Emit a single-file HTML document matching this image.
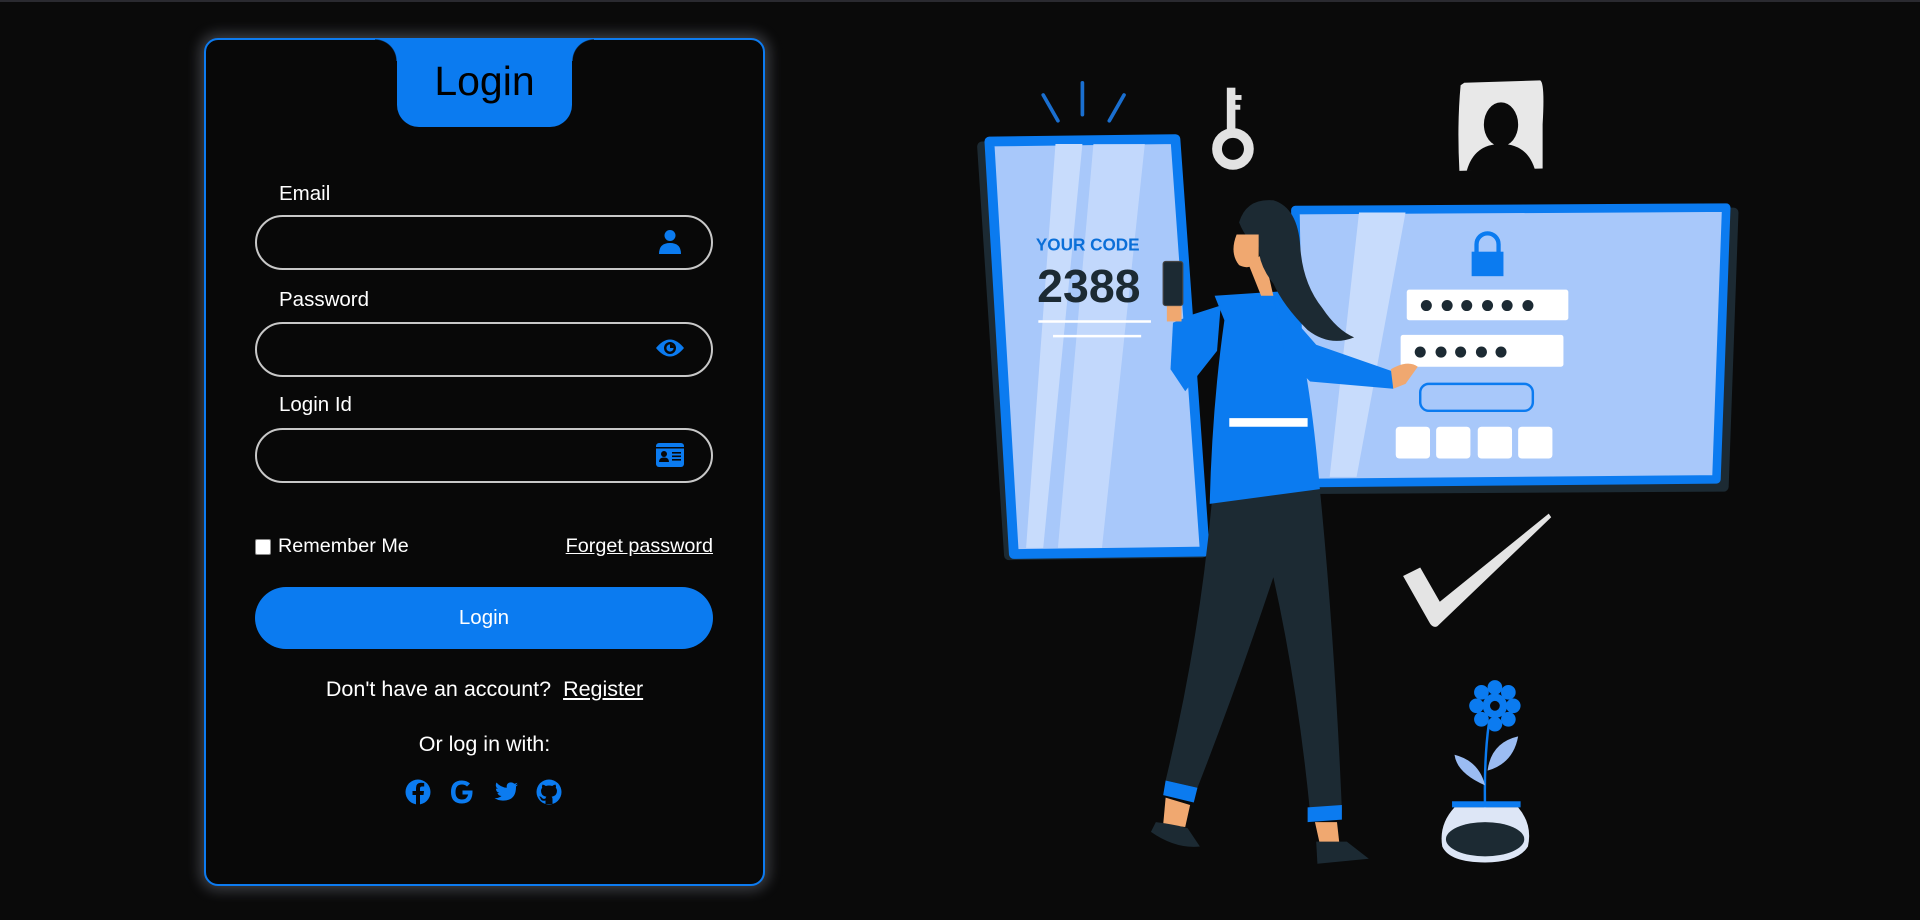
<!DOCTYPE html>
<html><head><meta charset="utf-8"><style>
*{margin:0;padding:0;box-sizing:border-box}
body{width:1920px;height:918px;background:#0a0a0a;overflow:hidden;position:relative;font-family:"Liberation Sans",sans-serif;color:#fff;border-top:2px solid #2a2a30}
.card{position:absolute;left:204px;top:36px;width:561px;height:848px;background:#080808;border:2px solid #0d7bf0;border-radius:14px;box-shadow:0 0 14px 4px rgba(200,210,230,.28)}
.tab{position:absolute;left:397px;top:37px;width:175px;height:88px;background:#0b7bf0;border-radius:0 0 22px 22px;color:#000;font-size:41px;text-align:center;line-height:84px}
.tab:before,.tab:after{content:"";position:absolute;top:0;width:22px;height:22px}
.tab:before{left:-22px;background:radial-gradient(circle at 0 100%,#080808 21px,#0b7bf0 22px)}
.tab:after{right:-22px;background:radial-gradient(circle at 100% 100%,#080808 21px,#0b7bf0 22px)}
.lbl{position:absolute;left:279px;font-size:20.5px;line-height:24px}
.inp{position:absolute;left:255px;width:458px;height:55px;border:2px solid #c8c8c8;border-radius:28px}
.ico{position:absolute;left:655px}
.abs{position:absolute}
</style></head><body>
<div class="card"></div>
<div class="tab">Login</div>

<div class="lbl" style="top:180px">Email</div>
<div class="inp" style="top:213px"></div>
<svg class="ico" style="top:227px" width="30" height="26" viewBox="0 0 30 26"><circle cx="15" cy="6.5" r="5.5" fill="#0b7bf0"/><path d="M4 25 Q4 14 15 14 Q26 14 26 25Z" fill="#0b7bf0"/></svg>

<div class="lbl" style="top:286px">Password</div>
<div class="inp" style="top:320px"></div>
<svg class="ico" style="top:333px" width="30" height="26" viewBox="0 0 30 26"><path d="M1 13 Q15 -4 29 13 Q15 30 1 13Z" fill="#0b7bf0"/><circle cx="15" cy="13" r="6" fill="#080808"/><circle cx="15" cy="13" r="3.6" fill="#0b7bf0"/><path d="M15 9.4 A3.6 3.6 0 0 1 18.6 13 L15 13Z" fill="#080808"/></svg>

<div class="lbl" style="top:391px">Login Id</div>
<div class="inp" style="top:426px"></div>
<svg class="ico" style="top:440px" width="30" height="26" viewBox="0 0 30 26"><rect x="1" y="1" width="28" height="24" rx="3" fill="#0b7bf0"/><rect x="1" y="5" width="28" height="1.5" fill="#080808"/><circle cx="9" cy="12" r="3" fill="#080808"/><path d="M4 20 Q4 15.5 9 15.5 Q14 15.5 14 20Z" fill="#080808"/><rect x="17" y="10" width="9" height="1.6" fill="#080808"/><rect x="17" y="13.5" width="9" height="1.6" fill="#080808"/><rect x="17" y="17" width="9" height="1.6" fill="#080808"/></svg>

<div class="abs" style="left:255px;top:537px;width:16px;height:16px;background:#fff;border:1px solid #888;border-radius:2px"></div>
<div class="abs" style="left:278px;top:532px;font-size:19.8px;line-height:24px">Remember Me</div>
<div class="abs" style="left:533px;top:532px;font-size:19.8px;line-height:24px;text-decoration:underline;width:180px;text-align:right">Forget password</div>

<div class="abs" style="left:255px;top:585px;width:458px;height:62px;background:#0b7bf0;border-radius:31px;text-align:center;line-height:62px;font-size:20.5px">Login</div>

<div class="abs" style="left:204px;top:674px;width:561px;text-align:center;font-size:21.5px;line-height:26px">Don't have an account?&nbsp; <span style="text-decoration:underline">Register</span></div>
<div class="abs" style="left:204px;top:729px;width:561px;text-align:center;font-size:21.5px;line-height:26px">Or log in with:</div>

<svg class="abs" style="left:404px;top:776px" width="160" height="28" viewBox="0 0 160 28">
<circle cx="14" cy="14" r="12.5" fill="#0b7bf0"/><path d="M16 27 V17 H19.5 L20 13 H16 V10.5 Q16 8.5 18 8.5 H20.2 V5 Q18.5 4.7 17 4.7 Q12 4.7 12 10 V13 H8.5 V17 H12 V27Z" fill="#080808"/>
<path d="M68.5 12.5 H58.5 V16.5 H64.2 Q63 21.5 58 21.5 Q51.5 21.5 51.5 14 Q51.5 6.5 58 6.5 Q61 6.5 63 8.5 L66 5.5 Q62.8 2.5 58 2.5 Q47 2.5 47 14 Q47 25.5 58 25.5 Q69 25.5 68.5 12.5Z" fill="#0b7bf0"/>
<path d="M114 6.5 Q112.8 7.1 111.3 7.3 Q112.8 6.3 113.4 4.7 Q112 5.5 110.4 5.8 Q109 4.4 107 4.4 Q102.7 4.4 102.7 8.7 Q102.7 9.3 102.8 9.7 Q96.5 9.4 92.5 4.5 Q91.8 5.7 91.8 7 Q91.8 9.6 93.9 10.9 Q92.8 10.9 91.9 10.4 Q91.9 14 95.3 14.9 Q94.3 15.1 93.4 14.9 Q94.3 17.9 97.5 18 Q94.6 20.5 90.5 20 Q94 22.6 99 22.6 Q112 22.6 112 9 V8.5 Q113.2 7.6 114 6.5Z" fill="#0b7bf0"/>
<circle cx="145" cy="14" r="12.5" fill="#0b7bf0"/><path d="M141.5 26 V22.5 Q137.5 23.5 136.5 20.5 Q136 19 135 18.7 Q137 18 138 20 Q139.5 21.5 141.5 20.5 Q141.7 19.2 142.4 18.7 Q137 18 137 12.8 Q137 11 138.2 9.8 Q137.7 8.3 138.4 6.6 Q140 6.5 141.8 8 Q145 7.1 148.2 8 Q150 6.5 151.6 6.6 Q152.3 8.3 151.8 9.8 Q153 11 153 12.8 Q153 18 147.6 18.7 Q148.5 19.5 148.5 21 V26Z" fill="#080808"/>
</svg>

<svg class="abs" style="left:0;top:0" width="1920" height="918" viewBox="0 0 1568 750">
<g stroke="#1a6fd0" stroke-width="3" stroke-linecap="round"><line x1="852" y1="76" x2="864" y2="97"/><line x1="884" y1="66" x2="884" y2="92"/><line x1="918" y1="76" x2="906" y2="97"/></g>
<path d="M802 118 L958 116 L982 450 L824 452Z" fill="#1c2a33" stroke="#1c2a33" stroke-width="8" stroke-linejoin="round"/>
<path d="M808 114 L960 112 L984 449 L828 451Z" fill="#a8c8fa" stroke="#0b7bf0" stroke-width="8" stroke-linejoin="round"/>
<path d="M862 116 L884 116 L852 446 L838 446Z" fill="#c8dcfc"/>
<path d="M893 116 L935 116 L900 446 L864 446Z" fill="#c8dcfc" opacity=".8"/>
<text x="846" y="203" font-family="Liberation Sans,sans-serif" font-weight="bold" font-size="14" fill="#0b6fd8">YOUR CODE</text>
<text x="847" y="245" font-family="Liberation Sans,sans-serif" font-size="38" fill="#1c2a33" font-weight="bold">2388</text>
<line x1="848" y1="261" x2="940" y2="261" stroke="#fff" stroke-width="2"/><line x1="860" y1="273" x2="932" y2="273" stroke="#fff" stroke-width="2"/>
<g fill="#e2e2e2"><rect x="1002" y="70" width="7" height="38"/><rect x="1006" y="76" width="8" height="4"/><rect x="1006" y="84" width="7" height="4"/><circle cx="1007" cy="120" r="13" fill="none" stroke="#e2e2e2" stroke-width="8"/></g>
<path d="M1196 66 L1258 64 Q1262 66 1260 100 L1260 136 L1192 138 Q1190 100 1193 68Z" fill="#e8e8e8"/>
<ellipse cx="1226" cy="100" rx="14" ry="18" fill="#0a0a0a"/><path d="M1198 138 Q1204 116 1226 116 Q1248 116 1254 138Z" fill="#0a0a0a"/>
<path d="M1060 174 L1416 172 L1408 396 L1068 398Z" fill="#1c2a33" stroke="#1c2a33" stroke-width="8" stroke-linejoin="round"/>
<path d="M1058 170 L1410 168 L1402 390 L1062 393Z" fill="#a8c8fa" stroke="#0b7bf0" stroke-width="7" stroke-linejoin="round"/>
<path d="M1110 172 L1148 172 L1108 388 L1086 388Z" fill="#c8dcfc"/>
<path d="M1206 206 V198 A9 9 0 0 1 1224 198 V206" fill="none" stroke="#0b7bf0" stroke-width="3.5"/><rect x="1202" y="204" width="26" height="20" fill="#0b7bf0"/>
<rect x="1149" y="235" width="132" height="25" rx="2" fill="#fff"/><rect x="1144" y="272" width="133" height="26" rx="2" fill="#fff"/>
<g fill="#1c2a33"><circle cx="1165" cy="248" r="4.5"/><circle cx="1182" cy="248" r="4.5"/><circle cx="1198" cy="248" r="4.5"/><circle cx="1215" cy="248" r="4.5"/><circle cx="1231" cy="248" r="4.5"/><circle cx="1248" cy="248" r="4.5"/>
<circle cx="1160" cy="286" r="4.5"/><circle cx="1177" cy="286" r="4.5"/><circle cx="1193" cy="286" r="4.5"/><circle cx="1210" cy="286" r="4.5"/><circle cx="1226" cy="286" r="4.5"/></g>
<rect x="1160" y="312" width="92" height="22" rx="7" fill="none" stroke="#0b7bf0" stroke-width="2"/>
<g fill="#fff"><rect x="1140" y="347" width="28" height="26" rx="3"/><rect x="1173" y="347" width="28" height="26" rx="3"/><rect x="1207" y="347" width="28" height="26" rx="3"/><rect x="1240" y="347" width="28" height="26" rx="3"/></g>
<path d="M1146 469 L1160 462 L1176 490 L1265 418 L1267 421 L1174 510 Q1170 512 1167 506Z" fill="#e4e4e4"/>
<path d="M1216 590 Q1212 620 1213 660" stroke="#0b7bf0" stroke-width="2" fill="none"/>
<path d="M1213 640 Q1190 630 1188 615 Q1208 620 1213 640Z" fill="#9bbcf2"/><path d="M1215 628 Q1218 605 1240 600 Q1236 622 1215 628Z" fill="#9bbcf2"/>
<g fill="#0b7bf0"><circle cx="1221" cy="560" r="6"/><circle cx="1221" cy="590" r="6"/><circle cx="1206" cy="575" r="6"/><circle cx="1236" cy="575" r="6"/><circle cx="1210" cy="564" r="6"/><circle cx="1232" cy="564" r="6"/><circle cx="1210" cy="586" r="6"/><circle cx="1232" cy="586" r="6"/><circle cx="1221" cy="575" r="10"/></g>
<circle cx="1221" cy="575" r="4" fill="#0a0a0a"/>
<rect x="1186" y="653" width="56" height="5" fill="#0b7bf0"/>
<path d="M1188 658 L1240 658 Q1252 672 1248 690 Q1240 703 1213 703 Q1184 703 1178 690 Q1175 672 1188 658Z" fill="#dde6f6"/>
<ellipse cx="1213" cy="684" rx="32" ry="14" fill="#1c2a33"/>
<path d="M990 405 L1078 398 Q1090 520 1096 660 L1070 662 Q1060 560 1040 470 Q1010 560 978 642 L952 636 Q980 520 990 405Z" fill="#1c2a33"/>
<path d="M952 636 L978 642 L975 654 L950 648Z" fill="#0b7bf0"/><path d="M1068 658 L1096 656 L1096 668 L1068 670Z" fill="#0b7bf0"/>
<path d="M952 650 L972 656 L968 674 L950 672Z" fill="#f0a870"/><path d="M1074 670 L1092 670 L1094 688 L1078 688Z" fill="#f0a870"/>
<path d="M944 670 Q960 672 970 675 L980 690 Q960 692 940 678Z" fill="#1c2a33"/><path d="M1075 686 L1100 686 L1118 700 L1076 704Z" fill="#1c2a33"/>
<path d="M992 240 L1052 236 Q1070 300 1078 398 L988 410 Q990 330 1000 260Z" fill="#0b7bf0"/>
<path d="M997 248 L975 255 L958 262 L956 300 L968 318 L994 285Z" fill="#0b7bf0"/>
<path d="M1040 240 L1075 280 L1138 302 L1138 316 L1070 310 L1050 290Z" fill="#0b7bf0"/>
<path d="M1136 300 Q1150 292 1158 298 L1148 312 L1138 316Z" fill="#f0a870"/>
<rect x="953" y="245" width="12" height="16" fill="#f0a870"/><rect x="950" y="212" width="16" height="36" rx="2" fill="#1c2a33" stroke="#444" stroke-width="1"/>
<path d="M1004 340 L1068 340 L1068 347 L1004 347Z" fill="#fff"/>
<path d="M1020 215 L1030 240 L1040 240 L1032 205Z" fill="#f0a870"/>
<path d="M1012 180 Q1018 160 1040 162 Q1060 168 1062 200 Q1064 230 1080 250 Q1092 268 1106 274 Q1086 282 1068 268 Q1048 248 1040 230 Q1028 215 1028 200 Q1018 195 1012 180Z" fill="#1c2a33"/>
<path d="M1010 190 Q1004 205 1012 215 Q1022 220 1028 210 L1028 190Z" fill="#f0a870"/>
</svg>
</body></html>
